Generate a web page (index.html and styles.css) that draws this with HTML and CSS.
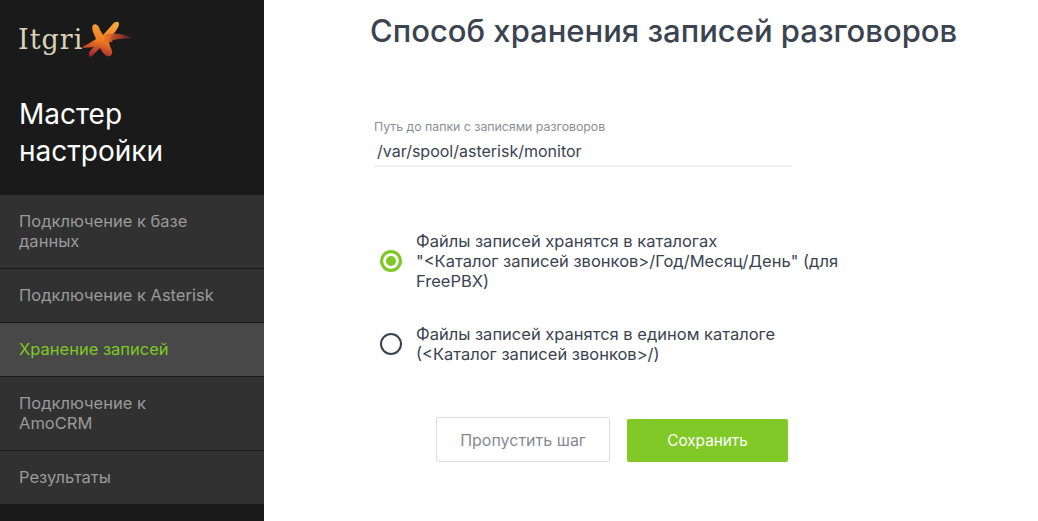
FILE: index.html
```html
<!DOCTYPE html>
<html lang="ru">
<head>
    <meta charset="UTF-8">
    <title>Мастер настройки</title>
    <link rel="stylesheet" href="styles.css">
</head>
<body>

    <div class="sidebar">
        <div class="logo">
            <span class="logo-text">Itgri</span>
            <svg class="logo-mark" width="52" height="38" viewBox="0 0 52 38">
                <defs>
                    <linearGradient id="star" x1="0.6" y1="0" x2="0.35" y2="1">
                        <stop offset="0" stop-color="#f8a53c"/>
                        <stop offset="0.55" stop-color="#ef7a22"/>
                        <stop offset="1" stop-color="#9c1f33"/>
                    </linearGradient>
                    <linearGradient id="streak" x1="0" y1="0" x2="1" y2="0">
                        <stop offset="0" stop-color="#ee7a25"/>
                        <stop offset="1" stop-color="#8c1d2e" stop-opacity="0.6"/>
                    </linearGradient>
                </defs>
                <path fill="url(#star)" d="M11 5 C14 3 17 6 18 10 L21 15 L30 5 C33 1 37 1 37 4 C37 8 32 13 28 18 L27 23 L30 31 C31 35 28 37 25 36 C22 35 20 31 18 28 L13 33 C10 37 7 38 7 35 C6 32 9 30 12 27 L1 28 C0 27 3 25 6 24 L14 19 L11 12 C10 9 10 7 11 5 Z"/>
                <path fill="url(#streak)" d="M22 15 C32 12 42 14 50 18 C44 18 38 19 30 20 C33 21 28 23 22 23 Z"/>
            </svg>
        </div>
        <h2 class="sidebar-title">Мастер настройки</h2>
        <ul class="steps">
            <li class="step">Подключение к базе данных</li>
            <li class="step">Подключение к Asterisk</li>
            <li class="step step-active">Хранение записей</li>
            <li class="step">Подключение к AmoCRM</li>
            <li class="step">Результаты</li>
        </ul>
    </div>

    <div class="content">
        <h1 class="page-title">Способ хранения записей разговоров</h1>

        <div class="path-field">
            <label class="path-label" for="recordPath">Путь до папки с записями разговоров</label>
            <input class="path-input" id="recordPath" type="text" value="/var/spool/asterisk/monitor">
        </div>

        <div class="radio-group">
            <div class="radio-row">
                <span class="radio radio-on"></span>
                <span class="radio-text">Файлы записей хранятся в каталогах<br>"&lt;Каталог записей звонков&gt;/Год/Месяц/День" (для FreePBX)</span>
            </div>
            <div class="radio-row">
                <span class="radio"></span>
                <span class="radio-text">Файлы записей хранятся в едином каталоге (&lt;Каталог записей звонков&gt;/)</span>
            </div>
        </div>

        <div class="buttons">
            <button class="btn btn-skip">Пропустить шаг</button>
            <button class="btn btn-save">Сохранить</button>
        </div>
    </div>

</body>
</html>
```

FILE: styles.css
```css
html, body {
    height: 100%;
}
body {
    font-family: Inter, "Open Sans", sans-serif;
    margin: 0;
    padding: 0;
    background: #fff;
    color: #3a4350;
    display: flex;
    overflow: hidden;
}
.sidebar {
    width: 264px;
    flex-shrink: 0;
    background: #1a1a1a;
}
.logo {
    display: flex;
    align-items: center;
    height: 38px;
    margin: 20px 0 0 18px;
}
.logo-text {
    font-family: "DejaVu Serif", serif;
    font-size: 27px;
    letter-spacing: 1px;
    color: #d8d2b8;
}
.logo-mark {
    margin-left: -1px;
}
.sidebar-title {
    margin: 0;
    padding: 38px 60px 25px 19px;
    font-size: 28px;
    font-weight: 400;
    line-height: 37px;
    color: #fff;
}
.steps {
    list-style: none;
    margin: 0;
    padding: 0;
}
.step {
    padding: 16px 48px 17px 19px;
    background: #313131;
    border-bottom: 1px solid #1a1a1a;
    font-size: 16.5px;
    line-height: 20px;
    color: #9a9a9a;
}
.step:last-child {
    border-bottom: none;
}
.step-active {
    background: #484848;
    color: #7ec824;
}
.content {
    flex: 1;
    padding-left: 106px;
}
.page-title {
    margin: 12px 0 0;
    font-size: 31px;
    font-weight: 500;
    line-height: 37px;
    color: #3a4350;
}
.path-field {
    width: 418px;
    margin: 70px 0 0 4px;
}
.path-label {
    display: block;
    font-size: 12.3px;
    line-height: 16px;
    color: #8a8f96;
}
.path-input {
    display: block;
    box-sizing: border-box;
    width: 100%;
    height: 32px;
    padding: 2px 3px 0;
    border: none;
    border-bottom: 2px solid #f0f0f0;
    outline: none;
    font-family: inherit;
    font-size: 16px;
    color: #3a4350;
}
.radio-group {
    display: flex;
    flex-direction: column;
    gap: 33px;
    width: 466px;
    margin: 64px 0 0 10px;
}
.radio-row {
    display: flex;
    align-items: center;
}
.radio {
    box-sizing: border-box;
    width: 22px;
    height: 22px;
    margin-right: 14px;
    flex-shrink: 0;
    border: 2px solid #3a4350;
    border-radius: 50%;
    background: #fff;
}
.radio-on {
    border: 3px solid #7ec824;
    background: #7ec824;
    box-shadow: inset 0 0 0 3px #fff;
}
.radio-text {
    font-size: 16.5px;
    line-height: 20px;
    color: #3a4350;
}
.buttons {
    display: flex;
    align-items: flex-end;
    gap: 17px;
    margin: 53px 0 0 66px;
}
.btn {
    font-family: inherit;
    font-size: 16px;
    border-radius: 2px;
    cursor: pointer;
}
.btn-skip {
    width: 174px;
    height: 45px;
    background: #fff;
    border: 1px solid #dedede;
    color: #858b92;
}
.btn-save {
    width: 161px;
    height: 43px;
    background: #80c926;
    border: none;
    font-size: 15.3px;
    color: #fff;
}
```
